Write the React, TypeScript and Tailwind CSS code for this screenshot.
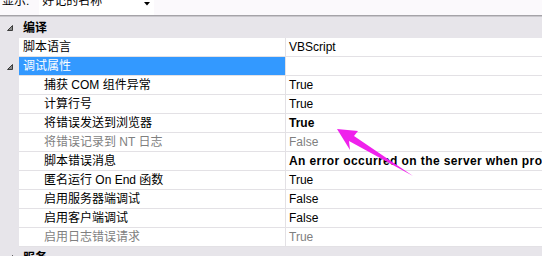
import React from "react";

/** 属性网格 — 调试属性 (ASP) */

interface PropRow {
  name: string;
  value: string;
  level: 1 | 2;
  selected?: boolean;
  expander?: boolean;
  bold?: boolean;
  wide?: boolean;
  disabled?: boolean;
}

const ROWS: PropRow[] = [
  { name: "脚本语言", value: "VBScript", level: 1 },
  { name: "调试属性", value: "", level: 1, selected: true, expander: true },
  { name: "捕获 COM 组件异常", value: "True", level: 2 },
  { name: "计算行号", value: "True", level: 2 },
  { name: "将错误发送到浏览器", value: "True", level: 2, bold: true },
  { name: "将错误记录到 NT 日志", value: "False", level: 2, disabled: true },
  {
    name: "脚本错误消息",
    value: "An error occurred on the server when processing the URL. Please contact the system administrator.",
    level: 2,
    bold: true,
    wide: true,
  },
  { name: "匿名运行 On End 函数", value: "True", level: 2 },
  { name: "启用服务器端调试", value: "False", level: 2 },
  { name: "启用客户端调试", value: "False", level: 2 },
  { name: "启用日志错误请求", value: "True", level: 2, disabled: true },
];

function Expander() {
  return (
    <svg width="6" height="6" viewBox="0 0 6 6" className="block">
      <polygon points="5.5,0.5 5.5,5.5 0.5,5.5" fill="#8a8a8a" stroke="#3c3c3c" strokeWidth="1" />
    </svg>
  );
}

function Category({ label }: { label: string }) {
  return (
    <div className="flex h-[21px] shrink-0 items-center bg-[#e7e5ea]">
      <div className="flex w-[19px] justify-center pl-[1px]"><Expander /></div>
      <span className="pl-[4px] font-bold text-black">{label}</span>
    </div>
  );
}

function Row({ r }: { r: PropRow }) {
  const nameColor = r.selected ? "text-white" : r.disabled ? "text-[#7f7f7f]" : "text-black";
  return (
    <div className="flex h-[19px] shrink-0">
      <div className="flex w-[19px] shrink-0 items-center justify-center bg-[#e7e5ea] pl-[1px]">
        {r.expander && <Expander />}
      </div>
      <div
        className={`flex w-[267px] shrink-0 items-center border-b border-r border-[#e3e1e5] ${
          r.selected ? "bg-[#3399ff]" : "bg-white"
        } ${r.level === 1 ? "pl-[4px]" : "pl-[25px]"}`}
      >
        <span className={`whitespace-nowrap ${nameColor}`}>{r.name}</span>
      </div>
      <div className="flex min-w-0 flex-1 items-center overflow-hidden border-b border-[#e3e1e5] bg-white pl-[3px]">
        <span
          className={`whitespace-nowrap ${r.bold ? "font-bold" : ""} ${r.wide ? "tracking-[0.4px]" : ""} ${
            r.disabled ? "text-[#7f7f7f]" : "text-black"
          }`}
        >
          {r.value}
        </span>
      </div>
    </div>
  );
}

export default function App() {
  return (
    <div className="relative flex h-[256px] w-[542px] flex-col overflow-hidden bg-white font-['Liberation_Sans','Noto_Sans_CJK_SC',sans-serif] text-[12px] leading-none">
      {/* toolbar: 显示 + 下拉框, 上半部分被裁掉 */}
      <div className="flex h-[15px] shrink-0 items-start overflow-hidden bg-[#fbf9fc]">
        <span className="-mt-[5px] pl-[2px] text-black">显示:</span>
        <div className="ml-[10px] flex h-[15px] w-[115px] items-start justify-between bg-white pl-[3px] pr-[4px]">
          <span className="-mt-[5px] text-black">好记的名称</span>
          <svg width="6" height="4" viewBox="0 0 6 4" className="mt-[2px]">
            <polygon points="0,0 6,0 3,3.5" fill="#000" />
          </svg>
        </div>
      </div>
      <div className="h-[1px] shrink-0 bg-[#a5a3a8]" />
      <div className="h-[1px] shrink-0 bg-[#c9c7cc]" />

      <Category label="编译" />
      {ROWS.map((r, i) => (
        <Row key={i} r={r} />
      ))}
      <Category label="服务" />

      {/* 标注箭头 */}
      <svg className="pointer-events-none absolute left-0 top-0" width="542" height="256">
        <polygon points="337,129 358,131 354,136 413,176 349,141 350,150" fill="#ef22ec" />
      </svg>
    </div>
  );
}
